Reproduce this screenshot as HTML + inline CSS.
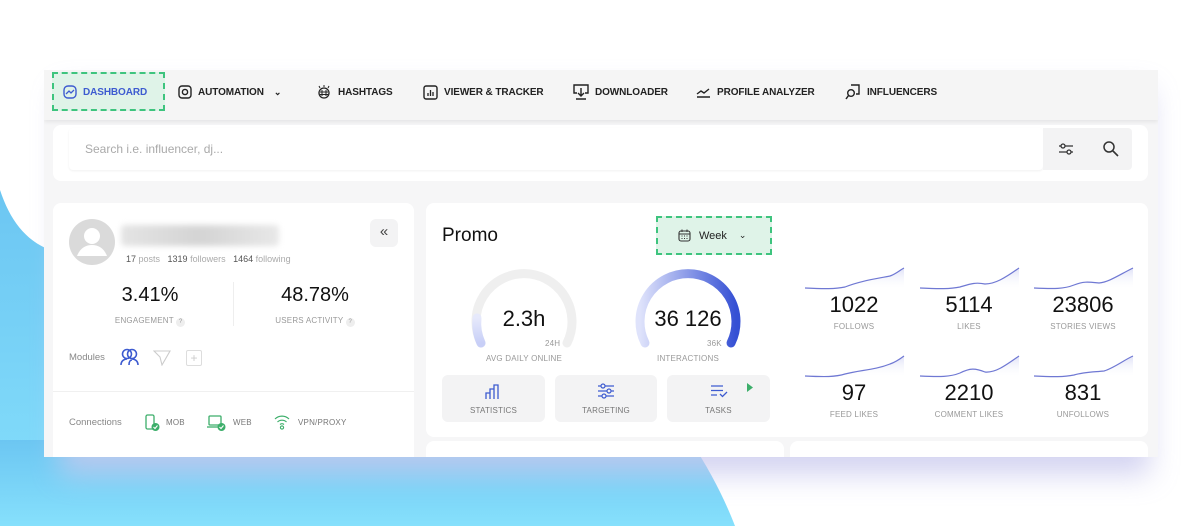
<!DOCTYPE html>
<html><head><meta charset="utf-8"><style>
*{box-sizing:border-box;margin:0;padding:0}
body{width:1200px;height:526px;overflow:hidden;background:#fff;font-family:"Liberation Sans",Arial,sans-serif;position:relative;color:#222}
.a{position:absolute}
.nav{font-size:10px;font-weight:bold;color:#222;display:flex;align-items:center;gap:6px;letter-spacing:-.1px}
.lbl{font-size:8px;color:#999;text-transform:uppercase;letter-spacing:.2px}
.card{background:#fff;border-radius:8px}
.btn{background:#f3f3f4;border-radius:6px;text-align:center}
.num{font-size:22px;color:#111;text-align:center}
</style></head><body>
<svg class="a" style="left:0;top:0" width="1200" height="526">
<defs>
<linearGradient id="bg" x1="0" y1="0" x2="0" y2="1"><stop offset="0" stop-color="#6cc6f2"/><stop offset="1" stop-color="#86e0fc"/></linearGradient>
<filter id="sh" x="-10%" y="-20%" width="120%" height="150%"><feGaussianBlur stdDeviation="14"/></filter>
</defs>
<path d="M0 190 C10 220 25 240 50 250 L50 526 L0 526 Z" fill="url(#bg)"/>
<path d="M0 440 L690 440 C710 470 725 500 735 526 L0 526 Z" fill="url(#bg)"/>
<rect x="60" y="90" width="1090" height="385" fill="#c9c9ee" filter="url(#sh)" opacity=".8"/>
</svg>
<div class="a" style="left:44px;top:70px;width:1114px;height:387px;background:#f6f6f7;overflow:hidden">
 <div class="a" style="left:0;top:0;width:1114px;height:50px;background:#f5f5f5;box-shadow:0 2px 4px rgba(0,0,0,.07)"></div>
</div>
<!-- nav -->
<div class="a" style="left:52px;top:72px;width:113px;height:39px;background:#dff3e8;border:2px dashed #3ec47e"></div>
<div class="a nav" style="left:63px;top:85px;color:#3d5bd0"><svg width="14" height="14" viewBox="0 0 14 14"><rect x="1" y="1" width="12" height="12" rx="4" fill="none" stroke="#3d5bd0" stroke-width="1.4"/><path d="M3 9 L6 6 L8 8 L11 5" fill="none" stroke="#3d5bd0" stroke-width="1.3"/></svg>DASHBOARD</div>
<div class="a nav" style="left:178px;top:85px"><svg width="14" height="14" viewBox="0 0 14 14"><rect x="1" y="1" width="12" height="12" rx="3" fill="none" stroke="#222" stroke-width="1.4"/><circle cx="7" cy="7" r="2.6" fill="none" stroke="#222" stroke-width="1.4"/></svg>AUTOMATION <span style="font-size:9px;margin-left:4px">&#8964;</span></div>
<div class="a nav" style="left:316px;top:85px"><svg width="16" height="14" viewBox="0 0 16 14"><circle cx="8" cy="8" r="5" fill="none" stroke="#222" stroke-width="1.3"/><path d="M6 5v6M10 5v6M4 7h8M4 9.5h8M8 0v2M3 1l1 2M13 1l-1 2" stroke="#222" stroke-width="1"/></svg>HASHTAGS</div>
<div class="a nav" style="left:423px;top:85px"><svg width="15" height="15" viewBox="0 0 15 15"><rect x="1" y="1" width="13" height="13" rx="2" fill="none" stroke="#222" stroke-width="1.4"/><path d="M5 11V8M7.5 11V5M10 11V7" stroke="#222" stroke-width="1.3"/></svg>VIEWER &amp; TRACKER</div>
<div class="a nav" style="left:573px;top:84px"><svg width="16" height="16" viewBox="0 0 16 16"><path d="M4 9H1V1h14v8h-3M8 4v8M5 9l3 3 3-3M3 15h10" fill="none" stroke="#222" stroke-width="1.4"/></svg>DOWNLOADER</div>
<div class="a nav" style="left:696px;top:85px"><svg width="15" height="14" viewBox="0 0 15 14"><path d="M1 9l4-3 3 2 5-4M1 12h13" fill="none" stroke="#222" stroke-width="1.4"/></svg>PROFILE ANALYZER</div>
<div class="a nav" style="left:845px;top:84px"><svg width="16" height="16" viewBox="0 0 16 16"><path d="M6 1h8v9h-3" fill="none" stroke="#222" stroke-width="1.4"/><circle cx="6" cy="9" r="3.3" fill="none" stroke="#222" stroke-width="1.4"/><path d="M3.5 11.5 1 15" stroke="#222" stroke-width="1.5"/></svg>INFLUENCERS</div>
<!-- search -->
<div class="a card" style="left:53px;top:125px;width:1095px;height:56px"></div>
<div class="a" style="left:69px;top:128px;width:974px;height:42px;background:#fff;border-radius:4px;box-shadow:0 1px 2px rgba(0,0,0,.06);font-size:12px;color:#aaa;padding:14px 16px">Search i.e. influencer, dj...</div>
<div class="a" style="left:1043px;top:128px;width:89px;height:42px;background:#f3f3f4;border-radius:0 4px 4px 0"></div>
<svg class="a" style="left:1058px;top:142px" width="16" height="14" viewBox="0 0 16 14"><path d="M1 4h14M1 10h14" stroke="#333" stroke-width="1.3"/><circle cx="5" cy="4" r="2" fill="#f3f3f4" stroke="#333" stroke-width="1.3"/><circle cx="11" cy="10" r="2" fill="#f3f3f4" stroke="#333" stroke-width="1.3"/></svg>
<svg class="a" style="left:1102px;top:140px" width="17" height="17" viewBox="0 0 17 17"><circle cx="7" cy="7" r="5" fill="none" stroke="#333" stroke-width="1.5"/><path d="M11 11l5 5" stroke="#333" stroke-width="1.6"/></svg>
<!-- left card -->
<div class="a" style="left:53px;top:203px;width:361px;height:254px;background:#fff;border-radius:8px 8px 0 0"></div>
<svg class="a" style="left:68px;top:218px" width="48" height="48" viewBox="0 0 48 48"><circle cx="24" cy="24" r="23" fill="#dadada"/><circle cx="24" cy="18" r="8" fill="#fff"/><path d="M9 38c3-8 9-11 15-11s12 3 15 11" fill="#fff"/></svg>
<div class="a" style="left:121px;top:225px;width:158px;height:21px;background:linear-gradient(90deg,#e4e4e4,#d4d4d4,#e8e8e8);filter:blur(3px);border-radius:4px"></div>
<div class="a" style="left:126px;top:254px;font-size:9px;color:#aaa"><span style="color:#555">17</span> posts &nbsp;&nbsp;<span style="color:#555">1319</span> followers &nbsp;&nbsp;<span style="color:#555">1464</span> following</div>
<div class="a btn" style="left:370px;top:219px;width:28px;height:28px;font-size:15px;line-height:26px;color:#444">«</div>
<div class="a" style="left:95px;top:284px;width:110px;text-align:center;font-size:20px;color:#111">3.41%</div>
<div class="a lbl" style="left:95px;top:316px;width:110px;text-align:center">ENGAGEMENT <span style="display:inline-block;width:9px;height:9px;border-radius:5px;background:#eee;font-size:6px;line-height:9px">?</span></div>
<div class="a" style="left:233px;top:282px;width:1px;height:44px;background:#eee"></div>
<div class="a" style="left:260px;top:284px;width:110px;text-align:center;font-size:20px;color:#111">48.78%</div>
<div class="a lbl" style="left:255px;top:316px;width:120px;text-align:center">USERS ACTIVITY <span style="display:inline-block;width:9px;height:9px;border-radius:5px;background:#eee;font-size:6px;line-height:9px">?</span></div>
<div class="a" style="left:69px;top:352px;font-size:9.5px;color:#888">Modules</div>
<svg class="a" style="left:120px;top:348px" width="20" height="18" viewBox="0 0 20 18"><circle cx="7" cy="6" r="4.5" fill="none" stroke="#3d5bd0" stroke-width="1.6"/><circle cx="12" cy="6" r="4.5" fill="none" stroke="#3d5bd0" stroke-width="1.6"/><path d="M1 17c0-4 3-6 6-6M18 17c0-4-3-6-6-6M9 17c0-3 1-5 3-5" fill="none" stroke="#3d5bd0" stroke-width="1.6"/></svg>
<svg class="a" style="left:153px;top:350px" width="18" height="16" viewBox="0 0 18 16"><path d="M1 1h16L9 15 7 7z" fill="none" stroke="#ccc" stroke-width="1.1"/></svg>
<div class="a" style="left:186px;top:350px;width:16px;height:16px;border:1px solid #ddd;border-radius:2px;color:#ccc;font-size:12px;text-align:center;line-height:14px">+</div>
<div class="a" style="left:53px;top:391px;width:361px;height:1px;background:#f0f0f0"></div>
<div class="a" style="left:69px;top:417px;font-size:9.5px;color:#888">Connections</div>
<svg class="a" style="left:145px;top:414px" width="15" height="18" viewBox="0 0 15 18"><rect x="1" y="1" width="8" height="14" rx="1.5" fill="none" stroke="#3cae6a" stroke-width="1.3"/><circle cx="10.5" cy="13" r="4" fill="#3cae6a"/><path d="M8.5 13l1.5 1.5 2.5-3" stroke="#fff" stroke-width="1.1" fill="none"/></svg>
<div class="a lbl" style="left:166px;top:418px;color:#777">MOB</div>
<svg class="a" style="left:207px;top:414px" width="19" height="18" viewBox="0 0 19 18"><rect x="2" y="2" width="12" height="9" rx="1" fill="none" stroke="#3cae6a" stroke-width="1.3"/><path d="M0 13h12" stroke="#3cae6a" stroke-width="1.3"/><circle cx="14.5" cy="13" r="4" fill="#3cae6a"/><path d="M12.5 13l1.5 1.5 2.5-3" stroke="#fff" stroke-width="1.1" fill="none"/></svg>
<div class="a lbl" style="left:233px;top:418px;color:#777">WEB</div>
<svg class="a" style="left:274px;top:414px" width="16" height="16" viewBox="0 0 16 16"><path d="M1 5a10 10 0 0 1 14 0M3.5 8a6.5 6.5 0 0 1 9 0M6 10.5a3 3 0 0 1 4 0" fill="none" stroke="#3cae6a" stroke-width="1.2"/><circle cx="8" cy="13.5" r="1.6" fill="none" stroke="#3cae6a" stroke-width="1.1"/></svg>
<div class="a lbl" style="left:298px;top:418px;color:#777">VPN/PROXY</div>
<!-- promo -->
<div class="a card" style="left:426px;top:203px;width:722px;height:234px"></div>
<div class="a" style="left:442px;top:225px;font-size:19px;color:#111">Promo</div>
<div class="a" style="left:656px;top:216px;width:116px;height:39px;background:#dff3e8;border:2px dashed #3ec47e"></div>
<div class="a" style="left:678px;top:229px;font-size:11px;color:#222;display:flex;align-items:center;gap:8px"><svg width="13" height="13" viewBox="0 0 13 13"><rect x="1" y="2" width="11" height="10" rx="2" fill="none" stroke="#333" stroke-width="1.1"/><path d="M1 5h11M4 0.5v2.5M9 0.5v2.5" stroke="#333" stroke-width="1"/><path d="M3.5 7h1M6 7h1M8.5 7h1M3.5 9.5h1M6 9.5h1M8.5 9.5h1" stroke="#333"/></svg>Week <span style="font-size:9px;margin-left:4px">&#8964;</span></div>
<svg class="a" style="left:460px;top:260px" width="300" height="95" viewBox="460 260 300 95">
<defs><linearGradient id="g2" x1="0" y1="0" x2="1" y2="0"><stop offset="0" stop-color="#dfe3fb"/><stop offset="1" stop-color="#3550d4"/></linearGradient>
<linearGradient id="g1" x1="0" y1="1" x2="0" y2="0"><stop offset="0" stop-color="#c8cff7"/><stop offset="1" stop-color="#e6e9fb"/></linearGradient></defs>
<path d="M481 343 A48 48 0 1 1 567 343" fill="none" stroke="#efefef" stroke-width="9" stroke-linecap="round"/>
<path d="M481 343 A48 48 0 0 1 477 318" fill="none" stroke="url(#g1)" stroke-width="9" stroke-linecap="round"/>
<path d="M645 343 A48 48 0 1 1 731 343" fill="none" stroke="url(#g2)" stroke-width="9" stroke-linecap="round"/>
</svg>
<div class="a" style="left:474px;top:306px;width:100px;text-align:center;font-size:22px;color:#111">2.3h</div>
<div class="a lbl" style="left:545px;top:339px">24H</div>
<div class="a lbl" style="left:464px;top:354px;width:120px;text-align:center">AVG DAILY ONLINE</div>
<div class="a" style="left:633px;top:306px;width:110px;text-align:center;font-size:22px;color:#111">36 126</div>
<div class="a lbl" style="left:707px;top:339px">36K</div>
<div class="a lbl" style="left:628px;top:354px;width:120px;text-align:center">INTERACTIONS</div>
<div class="a btn" style="left:442px;top:375px;width:103px;height:47px"></div>
<div class="a btn" style="left:555px;top:375px;width:102px;height:47px"></div>
<div class="a btn" style="left:667px;top:375px;width:103px;height:47px"></div>
<svg class="a" style="left:485px;top:384px" width="18" height="16" viewBox="0 0 18 16"><path d="M1 15V9h4v6M5 15V5h4v10M9 15V1h4v14" fill="none" stroke="#3d5bd0" stroke-width="1.3"/></svg>
<svg class="a" style="left:597px;top:383px" width="18" height="16" viewBox="0 0 18 16"><path d="M1 3h16M1 8h16M1 13h16" stroke="#3d5bd0" stroke-width="1.2"/><circle cx="6" cy="3" r="2" fill="#f3f3f4" stroke="#3d5bd0" stroke-width="1.2"/><circle cx="12" cy="8" r="2" fill="#f3f3f4" stroke="#3d5bd0" stroke-width="1.2"/><circle cx="7" cy="13" r="2" fill="#f3f3f4" stroke="#3d5bd0" stroke-width="1.2"/></svg>
<svg class="a" style="left:710px;top:384px" width="18" height="14" viewBox="0 0 18 14"><path d="M1 2h12M1 6.5h12M1 11h6M10 10l2.5 2.5L17 8" fill="none" stroke="#3d5bd0" stroke-width="1.3"/></svg>
<svg class="a" style="left:746px;top:383px" width="8" height="9"><path d="M1 0l6 4.5L1 9z" fill="#3cae6a"/></svg>
<div class="a lbl" style="left:442px;top:406px;width:103px;text-align:center;color:#777">STATISTICS</div>
<div class="a lbl" style="left:555px;top:406px;width:102px;text-align:center;color:#777">TARGETING</div>
<div class="a lbl" style="left:667px;top:406px;width:103px;text-align:center;color:#777">TASKS</div>
<!-- sparklines -->
<svg class="a" style="left:800px;top:260px" width="340" height="130" viewBox="0 0 340 130">
<defs><linearGradient id="sf" x1="0" y1="0" x2="0" y2="1"><stop offset="0" stop-color="#dfe1f7"/><stop offset="1" stop-color="#fff" stop-opacity="0"/></linearGradient></defs>
<g><path d="M5 28C25 29 35 29 45 27C60 21 75 19 90 16C96 14 100 10 104 8L104 30L5 30Z" fill="url(#sf)"/><path d="M5 28C25 29 35 29 45 27C60 21 75 19 90 16C96 14 100 10 104 8" fill="none" stroke="#6f78d3" stroke-width="1.2"/></g>
<g transform="translate(115 0)"><path d="M5 28C25 29 35 29 45 27C55 24 60 22 70 24C80 24 90 18 104 8L104 30L5 30Z" fill="url(#sf)"/><path d="M5 28C25 29 35 29 45 27C55 24 60 22 70 24C80 24 90 18 104 8" fill="none" stroke="#6f78d3" stroke-width="1.2"/></g>
<g transform="translate(229 0)"><path d="M5 28C25 29 35 29 45 25C55 21 60 22 70 23C80 22 90 15 104 8L104 30L5 30Z" fill="url(#sf)"/><path d="M5 28C25 29 35 29 45 25C55 21 60 22 70 23C80 22 90 15 104 8" fill="none" stroke="#6f78d3" stroke-width="1.2"/></g>
<g transform="translate(0 88)"><path d="M5 28C25 29 35 29 45 26C60 22 75 22 90 16C96 14 100 11 104 8L104 30L5 30Z" fill="url(#sf)"/><path d="M5 28C25 29 35 29 45 26C60 22 75 22 90 16C96 14 100 11 104 8" fill="none" stroke="#6f78d3" stroke-width="1.2"/></g>
<g transform="translate(115 88)"><path d="M5 28C25 29 35 29 45 25C55 20 60 20 70 24C80 25 90 18 104 8L104 30L5 30Z" fill="url(#sf)"/><path d="M5 28C25 29 35 29 45 25C55 20 60 20 70 24C80 25 90 18 104 8" fill="none" stroke="#6f78d3" stroke-width="1.2"/></g>
<g transform="translate(229 88)"><path d="M5 28C25 29 35 29 45 27C55 24 65 24 75 23C85 20 95 12 104 8L104 30L5 30Z" fill="url(#sf)"/><path d="M5 28C25 29 35 29 45 27C55 24 65 24 75 23C85 20 95 12 104 8" fill="none" stroke="#6f78d3" stroke-width="1.2"/></g>
</svg>
<div class="a num" style="left:804px;top:292px;width:100px">1022</div>
<div class="a num" style="left:919px;top:292px;width:100px">5114</div>
<div class="a num" style="left:1033px;top:292px;width:100px">23806</div>
<div class="a lbl" style="left:794px;top:322px;width:120px;text-align:center">FOLLOWS</div>
<div class="a lbl" style="left:909px;top:322px;width:120px;text-align:center">LIKES</div>
<div class="a lbl" style="left:1023px;top:322px;width:120px;text-align:center">STORIES VIEWS</div>
<div class="a num" style="left:804px;top:380px;width:100px">97</div>
<div class="a num" style="left:919px;top:380px;width:100px">2210</div>
<div class="a num" style="left:1033px;top:380px;width:100px">831</div>
<div class="a lbl" style="left:794px;top:410px;width:120px;text-align:center">FEED LIKES</div>
<div class="a lbl" style="left:909px;top:410px;width:120px;text-align:center">COMMENT LIKES</div>
<div class="a lbl" style="left:1023px;top:410px;width:120px;text-align:center">UNFOLLOWS</div>
<div class="a card" style="left:426px;top:441px;width:358px;height:16px;border-radius:8px 8px 0 0"></div>
<div class="a card" style="left:790px;top:441px;width:358px;height:16px;border-radius:8px 8px 0 0"></div>
</body></html>
